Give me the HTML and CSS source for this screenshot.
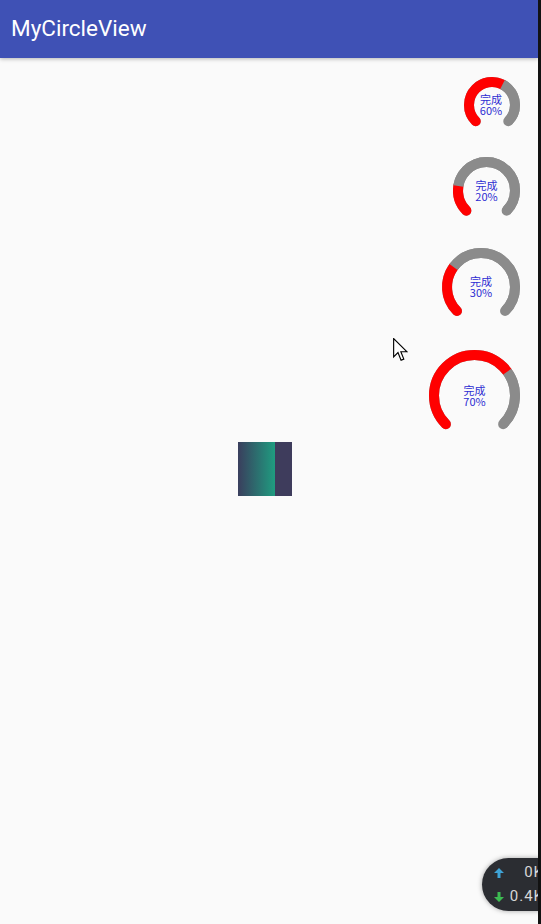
FILE: index.html
```html
<!DOCTYPE html>
<html>
<head>
<meta charset="utf-8">
<link rel="stylesheet" href="styles.css">
</head>
<body>
<div class="screen">
  <div class="app">
    <header class="toolbar"><h1 class="title">MyCircleView</h1></header>
    <main class="content">
      <div class="rings">
        <div class="ring ring-1">
          <svg viewBox="0 0 56 56" width="56" height="56">
            <g transform="rotate(135 28 28)">
              <circle class="track" cx="28" cy="28" r="23" pathLength="100"/>
              <circle class="prog" cx="28" cy="28" r="23" pathLength="100" stroke-dasharray="45 200"/>
              <circle class="rest" cx="28" cy="28" r="23" pathLength="100" stroke-dasharray="30 200" stroke-dashoffset="-45"/>
            </g>
          </svg>
          <div class="label">完成<br>60%</div>
        </div>
        <div class="ring ring-2">
          <svg viewBox="0 0 67 67" width="67" height="67">
            <g transform="rotate(135 33.5 33.5)">
              <circle class="track" cx="33.5" cy="33.5" r="28.5" pathLength="100"/>
              <circle class="prog" cx="33.5" cy="33.5" r="28.5" pathLength="100" stroke-dasharray="15 200"/>
              <circle class="rest" cx="33.5" cy="33.5" r="28.5" pathLength="100" stroke-dasharray="60 200" stroke-dashoffset="-15"/>
            </g>
          </svg>
          <div class="label">完成<br>20%</div>
        </div>
        <div class="ring ring-3">
          <svg viewBox="0 0 78 78" width="78" height="78">
            <g transform="rotate(135 39 39)">
              <circle class="track" cx="39" cy="39" r="34" pathLength="100"/>
              <circle class="prog" cx="39" cy="39" r="34" pathLength="100" stroke-dasharray="22.5 200"/>
              <circle class="rest" cx="39" cy="39" r="34" pathLength="100" stroke-dasharray="52.5 200" stroke-dashoffset="-22.5"/>
            </g>
          </svg>
          <div class="label">完成<br>30%</div>
        </div>
        <div class="ring ring-4">
          <svg viewBox="0 0 91 91" width="91" height="91">
            <g transform="rotate(135 45.5 45.5)">
              <circle class="track" cx="45.5" cy="45.5" r="40.5" pathLength="100"/>
              <circle class="prog" cx="45.5" cy="45.5" r="40.5" pathLength="100" stroke-dasharray="52.5 200"/>
              <circle class="rest" cx="45.5" cy="45.5" r="40.5" pathLength="100" stroke-dasharray="22.5 200" stroke-dashoffset="-52.5"/>
            </g>
          </svg>
          <div class="label">完成<br>70%</div>
        </div>
      </div>
      <div class="swatch"></div>
    </main>
    <svg class="cursor" viewBox="0 0 13 21" width="15" height="24">
      <path d="M0.5 0.5 L0.5 16.5 L4.3 12.8 L7 19.5 L9.4 18.5 L6.8 12 L12 12 Z" fill="#fff" stroke="#000" stroke-width="1" stroke-linejoin="miter"/>
    </svg>
    <div class="netspeed">
      <div class="net-row">
        <svg class="arrow" viewBox="0 0 10 10" width="10" height="10"><path d="M5 0 L10 5 L6.5 5 L6.5 10 L3.5 10 L3.5 5 L0 5 Z" fill="#3fa3d6"/></svg>
        <span class="speed">0K</span>
      </div>
      <div class="net-row">
        <svg class="arrow" viewBox="0 0 10 10" width="10" height="10"><path d="M5 10 L10 5 L6.5 5 L6.5 0 L3.5 0 L3.5 5 L0 5 Z" fill="#3dbb52"/></svg>
        <span class="speed">0.4K</span>
      </div>
    </div>
  </div>
  <div class="edge"></div>
</div>
</body>
</html>
```
FILE: styles.css
```css
html, body {
  margin: 0;
  padding: 0;
}
body {
  width: 541px;
  height: 924px;
  overflow: hidden;
  background: #fafafa;
  font-family: Roboto, "Noto Sans", sans-serif;
}
.screen {
  display: flex;
  height: 924px;
}
.app {
  position: relative;
  width: 538px;
  height: 924px;
  overflow: hidden;
  background: #fafafa;
}
.edge {
  width: 3px;
  background: #121212;
}
.toolbar {
  height: 58px;
  background: #3f51b5;
  display: flex;
  align-items: center;
  padding-left: 11px;
  box-shadow: 0 1px 4px rgba(0, 0, 0, 0.28);
  position: relative;
  z-index: 1;
}
.title {
  margin: 0;
  color: #fff;
  font-family: Roboto, sans-serif;
  font-weight: 400;
  font-size: 22.5px;
  letter-spacing: 0;
  padding-bottom: 2px;
}
.content {
  display: flex;
  flex-direction: column;
}
.rings {
  display: flex;
  flex-direction: column;
  align-items: flex-end;
  gap: 24px;
  padding-top: 19px;
  padding-right: 18px;
}
.ring {
  display: grid;
  place-items: center;
}
.ring > * {
  grid-area: 1 / 1;
}
.ring svg {
  display: block;
  overflow: visible;
}
.track, .prog, .rest {
  fill: none;
  stroke-width: 10;
}
.track {
  stroke: #8b8b8b;
  stroke-dasharray: 75 200;
  stroke-linecap: round;
}
.prog {
  stroke: #ff0000;
  stroke-linecap: round;
}
.rest {
  stroke: #8b8b8b;
  stroke-linecap: butt;
}
.label {
  color: #2d2dd2;
  font-family: "Noto Sans CJK SC", "Noto Sans", sans-serif;
  font-size: 11px;
  line-height: 11px;
  text-align: center;
}
.ring-1 .label { margin-left: -2px; }
.swatch {
  width: 54px;
  height: 54px;
  margin-left: 238px;
  margin-top: 1px;
  background: linear-gradient(to right, #3a3e5d 0, #1f9c80 37px, #3e3c5c 37px, #3e3c5c 100%);
}
.cursor {
  position: absolute;
  left: 393px;
  top: 338px;
}
.netspeed {
  position: absolute;
  left: 482px;
  top: 858px;
  width: 80px;
  height: 53px;
  border-radius: 27px;
  background: #2b2d32;
  box-shadow: 0 0 5px rgba(0, 0, 0, 0.35);
  display: flex;
  flex-direction: column;
  justify-content: center;
  gap: 9px;
  box-sizing: border-box;
  padding-left: 12px;
}
.net-row {
  display: flex;
  align-items: center;
  justify-content: space-between;
  width: 50px;
}
.arrow {
  display: block;
}
.speed {
  color: #d8d8d8;
  font-family: Roboto, sans-serif;
  font-size: 15px;
  line-height: 15px;
  letter-spacing: 1px;
}
```
